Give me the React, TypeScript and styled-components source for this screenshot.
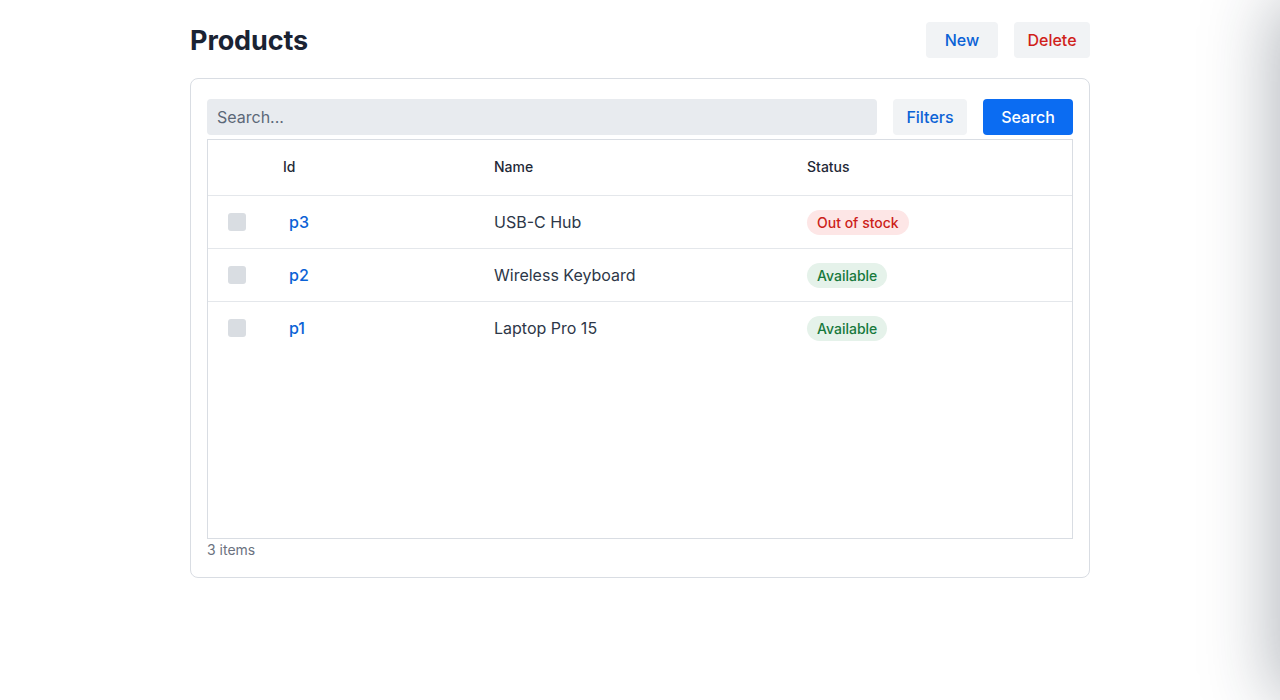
import styled, { createGlobalStyle } from "styled-components";

const GlobalStyle = createGlobalStyle`
  html, body {
    margin: 0;
    background: #ffffff;
    font-family: Inter, "Noto Sans", "Liberation Sans", sans-serif;
    color: #1f2937;
    overflow: hidden;
  }
  * { box-sizing: border-box; }
`;

const Page = styled.div`
  width: 900px;
  margin: 0 auto;
  padding-top: 22px;
`;

const Header = styled.div`
  display: flex;
  align-items: center;
  justify-content: space-between;
  height: 36px;
  margin-bottom: 20px;
`;

const Title = styled.h1`
  margin: 0;
  font-size: 27px;
  font-weight: 700;
  color: #1a2333;
  letter-spacing: -0.1px;
`;

const Actions = styled.div`
  display: flex;
  gap: 16px;
`;

const Button = styled.button<{ $tone?: "blue" | "red" | "primary"; $w: number }>`
  width: ${(p) => p.$w}px;
  height: 36px;
  padding: 0;
  border: none;
  border-radius: 4px;
  font-family: inherit;
  font-size: 16px;
  font-weight: 500;
  cursor: pointer;
  background: ${(p) => (p.$tone === "primary" ? "#0b6cf2" : "#f1f3f5")};
  color: ${(p) =>
    p.$tone === "primary" ? "#ffffff" : p.$tone === "red" ? "#d01f1b" : "#0b62d6"};
`;

const Card = styled.div`
  border: 1px solid #d9dde3;
  border-radius: 8px;
  padding: 20px 16px 17px;
`;

const Toolbar = styled.div`
  display: flex;
  gap: 16px;
  margin-bottom: 4px;
`;

const SearchInput = styled.input`
  flex: 1;
  height: 36px;
  border: none;
  border-radius: 4px;
  background: #e8ebef;
  padding: 0 10px;
  font-family: inherit;
  font-size: 16px;
  color: #1f2937;
  outline: none;
  &::placeholder { color: #5c6878; }
`;

const Table = styled.div`
  height: 400px;
  border: 1px solid #d9dde3;
`;

const Row = styled.div<{ $head?: boolean }>`
  display: grid;
  grid-template-columns: 75px 211px 313px 1fr;
  align-items: center;
  height: ${(p) => (p.$head ? "56px" : "53px")};
  border-bottom: 1px solid #e4e7eb;
  font-size: ${(p) => (p.$head ? "14px" : "16px")};
  font-weight: ${(p) => (p.$head ? 500 : 400)};
  color: ${(p) => (p.$head ? "#1f2937" : "#2d3748")};
  padding-bottom: ${(p) => (p.$head ? "2px" : "0")};
  &:last-child { border-bottom-color: transparent; }
`;

const CheckCell = styled.div`
  padding-left: 20px;
  display: flex;
`;

const Check = styled.span`
  width: 18px;
  height: 18px;
  border-radius: 3px;
  background: #d9dde2;
`;

const IdLink = styled.a`
  padding-left: 6px;
  color: #0b62d6;
  font-weight: 500;
  text-decoration: none;
`;

const Badge = styled.span<{ $ok: boolean }>`
  display: inline-flex;
  align-items: center;
  height: 25px;
  padding: 0 10px;
  border-radius: 13px;
  font-size: 14px;
  font-weight: 500;
  background: ${(p) => (p.$ok ? "#e5f2ea" : "#fde6e6")};
  color: ${(p) => (p.$ok ? "#17793c" : "#cc1f1a")};
`;

const Footer = styled.div`
  margin-top: 1px;
  line-height: 20px;
  font-size: 14px;
  color: #6b7280;
`;

const Drawer = styled.aside`
  position: fixed;
  top: 0;
  left: 100%;
  width: 420px;
  height: 100vh;
  background: #ffffff;
  border-radius: 12px 0 0 12px;
  box-shadow: -6px 0 70px rgba(30, 41, 59, 0.34);
`;

const products = [
  { id: "p3", name: "USB-C Hub", available: false },
  { id: "p2", name: "Wireless Keyboard", available: true },
  { id: "p1", name: "Laptop Pro 15", available: true },
];

export default function App() {
  return (
    <>
      <GlobalStyle />
      <Page>
        <Header>
          <Title>Products</Title>
          <Actions>
            <Button $tone="blue" $w={72}>New</Button>
            <Button $tone="red" $w={76}>Delete</Button>
          </Actions>
        </Header>
        <Card>
          <Toolbar>
            <SearchInput placeholder="Search..." />
            <Button $tone="blue" $w={74}>Filters</Button>
            <Button $tone="primary" $w={90}>Search</Button>
          </Toolbar>
          <Table>
            <Row $head>
              <div />
              <div>Id</div>
              <div>Name</div>
              <div>Status</div>
            </Row>
            {products.map((p) => (
              <Row key={p.id}>
                <CheckCell>
                  <Check />
                </CheckCell>
                <div>
                  <IdLink href="#">{p.id}</IdLink>
                </div>
                <div>{p.name}</div>
                <div>
                  <Badge $ok={p.available}>
                    {p.available ? "Available" : "Out of stock"}
                  </Badge>
                </div>
              </Row>
            ))}
          </Table>
          <Footer>3 items</Footer>
        </Card>
      </Page>
      <Drawer />
    </>
  );
}
